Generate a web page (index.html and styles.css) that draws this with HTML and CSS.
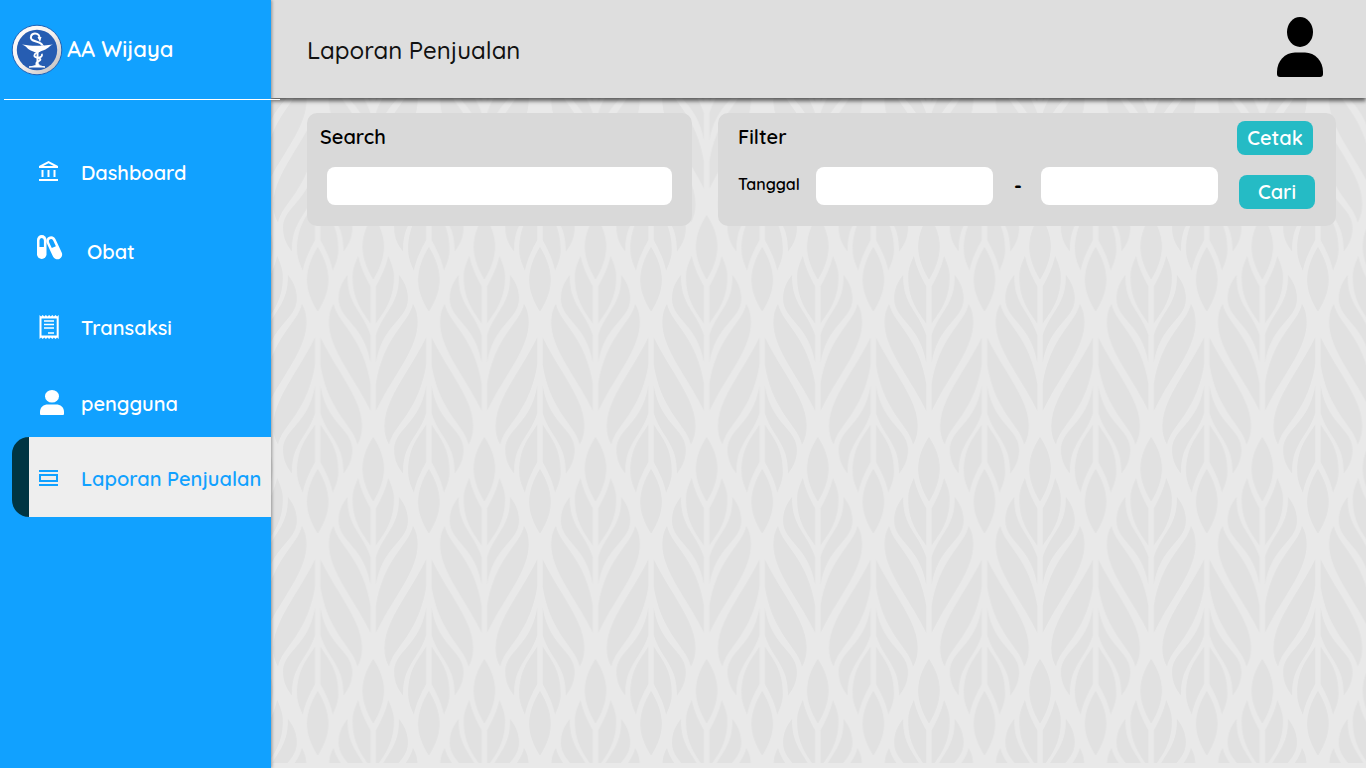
FILE: index.html
```
<!DOCTYPE html>
<html lang="id">
<head>
<meta charset="utf-8">
<meta name="viewport" content="width=device-width, initial-scale=1">
<title>Laporan Penjualan</title>
<link rel="stylesheet" href="styles.css">
</head>
<body>
<div class="app">
  <aside class="sidebar">
    <div class="brand">
      <svg class="brand__logo" viewBox="0 0 50 50" aria-hidden="true">
        <defs>
          <linearGradient id="ring" x1="0" y1="0" x2="1" y2="1">
            <stop offset="0" stop-color="#ffffff"/><stop offset=".5" stop-color="#f4f0ee"/><stop offset="1" stop-color="#b9b6b6"/>
          </linearGradient>
        </defs>
        <circle cx="25" cy="25" r="24.8" fill="url(#ring)" stroke="#1d62b8"/>
        <circle cx="25" cy="25" r="20.2" fill="#265db2"/>
        <path d="M10 19.500c6 .9 9 1.200 14 1.200s11-.3 17-1.200c-4 1.200-5 5-11.500 6.500l-3.500 1.300h-3l-3-1.300c-5-1.500-5-5-10-6.500z" fill="#fff"/>
        <path d="M25.500 26v14" stroke="#fff" stroke-width="2"/>
        <path d="M17 42c4-.6 7-1 8.500-4 1.500 3 4.500 3.400 7.500 4z" fill="#fff" stroke="#fff"/>
        <path d="M27.500 14c.5-3.500-1.500-5.500-4.500-5.500-4 0-5 4-3.300 6 2.300 2.500 9.300 1.500 10.800 6" fill="none" stroke="#fff" stroke-width="2"/>
        <path d="M31 20.500c.5 3-3 5.500-6 7s-4 4.500 0 5 6-2 4.500-3.500M25 32.500c3.500.5 4.500 2 2 3.500s-4 2.500-1 4" fill="none" stroke="#fff" stroke-width="1.800"/>
        <path d="M25.500 12h4l-1.500 5z" fill="#fff"/>
      </svg>
      <span class="brand__name">AA Wijaya</span>
    </div>
    <nav class="nav">
      <a class="nav__item" href="#">
        <svg class="nav__icon" viewBox="0 0 24 24" aria-hidden="true">
          <path fill-rule="evenodd" d="M11.500 2 21 7v2H2V7zM11.500 4.200 6.300 7h10.400z" fill="currentColor"/>
          <path d="M5.500 11v7M11.500 11v7M17.500 11v7M2 21h19" stroke="currentColor" stroke-width="2" fill="none"/>
        </svg>
        <span class="nav__text">Dashboard</span>
      </a>
      <a class="nav__item nav__item--wide" href="#">
        <svg class="nav__icon" viewBox="0 0 24 24" aria-hidden="true">
          <rect x="0" y="-3" width="9.500" height="24" rx="4.700" fill="currentColor"/>
          <path d="M2.500 9V2.500a2.200 2.500 0 0 1 4.400 0V9z" fill="#11a1ff"/>
          <g transform="rotate(-25 17.300 10)">
            <rect x="12.500" y="-2.500" width="9.600" height="24.500" rx="4.800" fill="currentColor"/>
            <path d="M15 9V3a2.200 2.500 0 0 1 4.500 0v6z" fill="#11a1ff"/>
          </g>
        </svg>
        <span class="nav__text">Obat</span>
      </a>
      <a class="nav__item" href="#">
        <svg class="nav__icon" viewBox="0 0 24 24" aria-hidden="true">
          <path fill-rule="evenodd" d="M2.500 1l1.600 1.500L5.700 1l1.600 1.500L8.900 1l1.600 1.500L12.100 1l1.600 1.500L15.300 1l1.600 1.500L18.500 1l1.600 1.500L21.700 1v24l-1.600-1.500-1.600 1.500-1.600-1.500-1.600 1.500-1.600-1.500-1.600 1.500-1.600-1.500L8.900 25l-1.600-1.500L5.700 25l-1.600-1.500L2.500 25zM4.500 4.500v17h15.200v-17z" fill="currentColor"/>
          <path d="M7 7h10M7 10.500h10M7 14h10M11 19h6" stroke="currentColor" stroke-width="1.500" fill="none"/>
        </svg>
        <span class="nav__text">Transaksi</span>
      </a>
      <a class="nav__item" href="#">
        <svg class="nav__icon" viewBox="0 0 24 24" aria-hidden="true">
          <ellipse cx="15" cy="6.300" rx="7" ry="6.300" fill="currentColor"/>
          <path d="M3 24v-2c0-5 3.500-7.500 8-7.500h8c4.500 0 8 2.500 8 7.500v2q0 1-1 1H4q-1 0-1-1z" fill="currentColor"/>
        </svg>
        <span class="nav__text">pengguna</span>
      </a>
      <a class="nav__item nav__item--active" href="#" aria-current="page">
        <svg class="nav__icon" viewBox="0 0 24 24" aria-hidden="true">
          <path d="M2 6h19M2 20h19M3 10h17v6H3z" stroke="currentColor" stroke-width="2" fill="none"/>
        </svg>
        <span class="nav__text">Laporan Penjualan</span>
      </a>
    </nav>
  </aside>

  <div class="page">
    <header class="topbar">
      <h1 class="topbar__title">Laporan Penjualan</h1>
      <button class="topbar__user" type="button" aria-label="Akun">
        <svg viewBox="0 0 46 60" aria-hidden="true">
          <ellipse cx="23" cy="15" rx="13" ry="15"/>
          <path d="M0 57v-2c0-11 8-19.500 18-19.500h10c10 0 18 8.500 18 19.500v2q0 3-3 3H3q-3 0-3-3z"/>
        </svg>
      </button>
    </header>

    <main class="content">
      <svg class="content__pattern" aria-hidden="true">
        <defs>
          <g id="half">
            <path d="M45 233C39 265 24 296 8 325V438C20 413 63 375 62 296C62 270 52 250 45 233z"/>
            <path d="M77 290C80 380 30 400 8 472V556C25 440 104 425 104 362C104 330 92 310 77 290z"/>
            <path d="M119 377C108 435 30 475 8 618V699C58 595 133 515 133 433C133 410 128 392 119 377z"/>
          </g>
          <g id="leaf">
            <path d="M0 110C-43 178-43 232 0 305C43 232 43 178 0 110z"/>
            <use href="#half"/>
            <use href="#half" transform="scale(-1 1)"/>
          </g>
          <pattern id="leaves" width="333.400" height="666" patternUnits="userSpaceOnUse" patternTransform="translate(46.700 80) scale(.33333)">
            <g fill="#e1e1e1">
              <use href="#leaf" x="166.700"/>
              <use href="#leaf" x="166.700" y="-666"/>
              <use href="#leaf" transform="translate(0 511) scale(1 -1)"/>
              <use href="#leaf" transform="translate(0 1177) scale(1 -1)"/>
              <use href="#leaf" transform="translate(333.400 511) scale(1 -1)"/>
              <use href="#leaf" transform="translate(333.400 1177) scale(1 -1)"/>
            </g>
          </pattern>
        </defs>
        <rect width="100%" height="100%" fill="url(#leaves)"/>
      </svg>

      <form class="panel search">
        <label class="panel__title" for="search">Search</label>
        <input class="field" id="search" type="text">
      </form>

      <form class="panel filter">
        <div class="filter__head">
          <h2 class="panel__title">Filter</h2>
          <button class="button" type="button">Cetak</button>
        </div>
        <div class="filter__row">
          <label class="filter__label" for="from">Tanggal</label>
          <input class="field" id="from" type="text">
          <span class="filter__dash">-</span>
          <input class="field" type="text" aria-label="Tanggal akhir">
          <button class="button filter__submit" type="button">Cari</button>
        </div>
      </form>
    </main>
  </div>
</div>
</body>
</html>
```
FILE: styles.css
```
* { box-sizing: border-box; }

body {
  margin: 0;
  font-family: Quicksand, Lato, sans-serif;
  font-size: 20px;
  font-weight: 600;
  line-height: 28px;
  color: #000;
}

h1, h2 { margin: 0; font-weight: inherit; }

button, input { font: inherit; border: 0; }

.app {
  display: grid;
  grid-template-columns: 271px 1fr;
  min-height: 100vh;
}

/* Sidebar */
.sidebar {
  position: relative;
  z-index: 2;
  background: #11a1ff;
  color: #fff;
  box-shadow: 1px 0 3px rgba(0, 0, 0, .35);
}

.brand {
  display: flex;
  align-items: center;
  gap: 5px;
  height: 100px;
  width: 276px;
  margin-left: 4px;
  padding-left: 8px;
  border-bottom: 1px solid #fff;
}

.brand__logo { width: 50px; height: 50px; overflow: visible; }

.brand__name { font-size: 22px; padding-bottom: 2px; }

.nav {
  display: flex;
  flex-direction: column;
  padding: 36px 0 0 12px;
}

.nav__item {
  display: flex;
  align-items: center;
  gap: 20px;
  height: 70px;
  margin-bottom: 6px;
  padding-left: 8px;
  border-left: 17px solid transparent;
  color: #fff;
  text-decoration: none;
  white-space: nowrap;
}

.nav__item:first-child { margin-bottom: 9px; }

.nav__item:nth-last-child(2) { margin-bottom: 0; }

.nav__item--wide { gap: 26px; }

.nav__item--active {
  height: 80px;
  margin-bottom: 0;
  border-left-color: #003543;
  border-radius: 17px 0 0 17px;
  background: #eee;
  color: #11a1ff;
}

.nav__icon {
  flex: none;
  width: 24px;
  height: 24px;
  overflow: visible;
}

.nav__text { padding-top: 4px; }

/* Top bar */
.page {
  display: flex;
  flex-direction: column;
  min-width: 0;
}

.topbar {
  position: relative;
  z-index: 1;
  display: flex;
  align-items: center;
  justify-content: space-between;
  height: 98px;
  padding: 0 43px 4px 36px;
  background: #dedede;
  box-shadow: 0 3px 4px rgba(0, 0, 0, .6);
}

.topbar__title {
  padding-top: 6px;
  font-size: 24px;
  font-weight: 500;
  line-height: 32px;
  color: #111;
}

.topbar__user {
  width: 46px;
  height: 60px;
  padding: 0;
  background: none;
}

.topbar__user svg { display: block; width: 46px; height: 60px; }

/* Content */
.content {
  position: relative;
  flex: 1;
  display: grid;
  grid-template-columns: 385fr 618fr;
  gap: 26px;
  align-items: start;
  padding: 15px 30px 15px 36px;
  background: #e9e9e9;
}

.content__pattern {
  position: absolute;
  top: 0;
  left: 0;
  width: 100%;
  height: calc(100% - 5px);
}

.panel {
  position: relative;
  min-height: 113px;
  border-radius: 10px;
  background: #d9d9d9;
}

.panel__title { font-size: 20px; }

.search {
  display: flex;
  flex-direction: column;
  gap: 16px;
  padding: 10px 20px 20px;
}

.search .panel__title { margin-left: -7px; }

.field {
  width: 100%;
  min-width: 0;
  height: 38px;
  padding: 0 12px;
  border-radius: 8px;
  background: #fff;
}

.filter { padding: 8px 21px 17px 20px; }

.filter__head {
  display: flex;
  justify-content: space-between;
  padding-right: 2px;
  margin-bottom: 12px;
}

.filter__head .panel__title { padding-top: 2px; }

.filter__row {
  display: flex;
  align-items: flex-start;
  height: 42px;
}

.filter__row .field { flex: 1; }

.filter__label {
  flex: none;
  width: 78px;
  font-size: 16px;
  line-height: 34px;
}

.filter__dash {
  flex: none;
  width: 48px;
  padding-left: 2px;
  text-align: center;
  line-height: 38px;
  font-weight: 700;
}

.button {
  flex: none;
  width: 76px;
  height: 34px;
  padding: 0;
  border-radius: 8px;
  background: #25bbc5;
  color: #fff;
}

.filter__submit { align-self: flex-end; margin-left: 21px; }
```
